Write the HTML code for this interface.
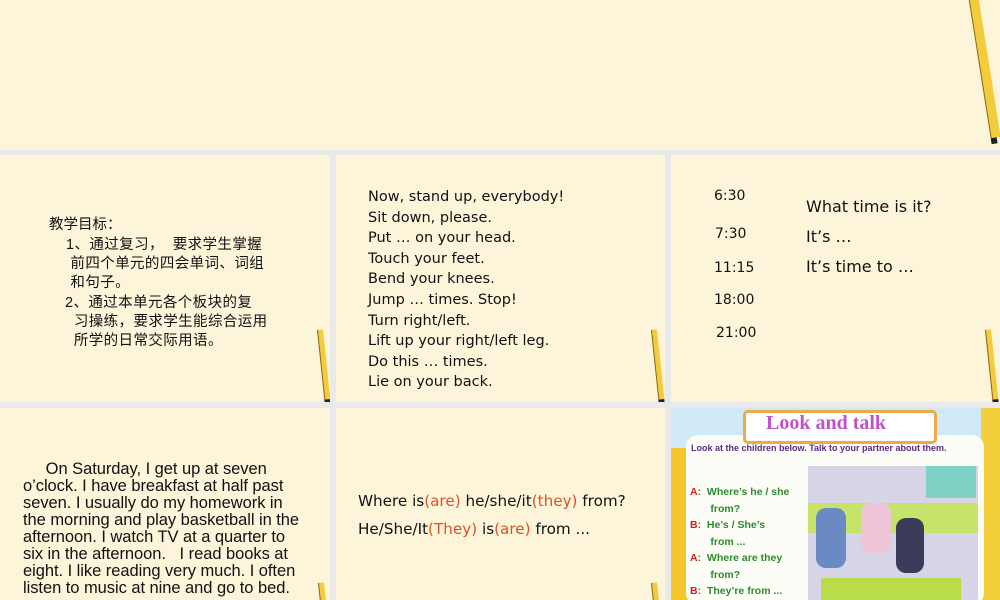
<!DOCTYPE html>
<html><head><meta charset="utf-8"><style>
body{margin:0;width:1000px;height:600px;background:#e9e9e9;position:relative;overflow:hidden;font-family:"Liberation Sans","Noto Sans CJK SC",sans-serif}
.s{position:absolute;background:#fdf5da;overflow:hidden}
.a{position:absolute;white-space:nowrap}
.p{position:absolute;width:5px;background:#f2cc3c;border-left:1px solid #8a6a20;transform-origin:top left}
.p:after{content:"";position:absolute;left:-1px;bottom:-6px;width:6px;height:6px;background:#222}
.dv{font-family:"DejaVu Sans",sans-serif;color:#111}
.r{color:#d9532a}
</style></head><body>
<div class="s" style="left:0;top:0;width:1000px;height:150px">
  <div class="p" style="left:968px;top:-5px;height:145px;transform:rotate(-9deg);width:9px"></div>
</div>
<div class="s" style="left:0;top:155px;width:330px;height:247px">
  <div class="a" style="left:49px;top:61px;font-size:14.5px;line-height:19px;color:#111">教学目标：</div>
  <div class="a" style="left:66px;top:81px;font-size:14.5px;line-height:19px;color:#111;letter-spacing:0.4px">1、通过复习，&nbsp; 要求学生掌握<br>&nbsp;前四个单元的四会单词、词组<br>&nbsp;和句子。</div>
  <div class="a" style="left:65px;top:139px;font-size:14.5px;line-height:19px;color:#111;letter-spacing:0.4px">2、通过本单元各个板块的复<br>&nbsp;&nbsp;习操练，要求学生能综合运用<br>&nbsp;&nbsp;所学的日常交际用语。</div>
  <div class="p" style="left:317px;top:175px;height:70px;transform:rotate(-6deg)"></div>
</div>
<div class="s" style="left:336px;top:155px;width:329px;height:247px">
  <div class="a dv" style="left:32px;top:32px;font-size:14.5px;line-height:20.6px">Now, stand up, everybody!<br>Sit down, please.<br>Put … on your head.<br>Touch your feet.<br>Bend your knees.<br>Jump … times. Stop!<br>Turn right/left.<br>Lift up your right/left leg.<br>Do this … times.<br>Lie on your back.</div>
  <div class="p" style="left:315px;top:175px;height:70px;transform:rotate(-6deg)"></div>
</div>
<div class="s" style="left:671px;top:155px;width:329px;height:247px">
  <div class="a dv" style="left:43px;top:33px;font-size:14px">6:30</div>
  <div class="a dv" style="left:44px;top:71px;font-size:14px">7:30</div>
  <div class="a dv" style="left:43px;top:105px;font-size:14px">11:15</div>
  <div class="a dv" style="left:43px;top:137px;font-size:14px">18:00</div>
  <div class="a dv" style="left:45px;top:170px;font-size:14px">21:00</div>
  <div class="a dv" style="left:135px;top:37px;font-size:16px;line-height:30px">What time is it?<br>It’s …<br>It’s time to …</div>
  <div class="p" style="left:314px;top:175px;height:70px;transform:rotate(-6deg)"></div>
</div>
<div class="s" style="left:0;top:408px;width:330px;height:192px">
  <div class="a" style="left:23px;top:53px;font-size:16.5px;line-height:17px;color:#111;letter-spacing:-0.05px">&nbsp;&nbsp;&nbsp;&nbsp;&nbsp;On Saturday, I get up at seven<br>o’clock. I have breakfast at half past<br>seven. I usually do my homework in<br>the morning and play basketball in the<br>afternoon. I watch TV at a quarter to<br>six in the afternoon.&nbsp;&nbsp; I read books at<br>eight. I like reading very much. I often<br>listen to music at nine and go to bed.</div>
  <div class="p" style="left:318px;top:175px;height:30px;transform:rotate(-6deg)"></div>
</div>
<div class="s" style="left:336px;top:408px;width:329px;height:192px">
  <div class="a dv" style="left:22px;top:79px;font-size:15.2px;line-height:28px">Where is<span class="r">(are)</span> he/she/it<span class="r">(they)</span> from?<br>He/She/It<span class="r">(They)</span> is<span class="r">(are)</span> from ...</div>
  <div class="p" style="left:315px;top:175px;height:30px;transform:rotate(-6deg)"></div>
</div>
<div class="s" style="left:671px;top:408px;width:329px;height:192px;background:#fbe98a">
  <div style="position:absolute;left:0;top:0;width:329px;height:40px;background:#cfeaf6"></div>
  <div style="position:absolute;left:0;top:40px;width:20px;height:152px;background:#f4c62c"></div>
  <div style="position:absolute;left:310px;top:0;width:19px;height:192px;background:#f3cf3c"></div>
  <div style="position:absolute;left:15px;top:27px;width:298px;height:170px;background:#fdfdf8;border-radius:12px"></div>
  <div style="position:absolute;left:72px;top:2px;width:188px;height:28px;background:#fff;border:3px solid #f0a84a;border-radius:5px"></div>
  <div class="a" style="left:95px;top:4px;font-size:20px;font-weight:bold;color:#c052c8;font-family:'Liberation Serif',serif">Look and talk</div>
  <div class="a" style="left:20px;top:35px;font-size:9px;font-weight:bold;color:#5a2a88">Look at the children below. Talk to your partner about them.</div>
  <div class="a" style="left:19px;top:76px;font-size:10.5px;font-weight:bold;line-height:16.5px;color:#2d8a2d"><span style="color:#d02020">A</span>:&nbsp; Where’s he / she<br>&nbsp;&nbsp;&nbsp;&nbsp;&nbsp;&nbsp; from?<br><span style="color:#d02020">B</span>:&nbsp; He’s / She’s<br>&nbsp;&nbsp;&nbsp;&nbsp;&nbsp;&nbsp; from ...<br><span style="color:#d02020">A</span>:&nbsp; Where are they<br>&nbsp;&nbsp;&nbsp;&nbsp;&nbsp;&nbsp; from?<br><span style="color:#d02020">B</span>:&nbsp; They’re from ...</div>
  <div style="position:absolute;left:137px;top:58px;width:170px;height:134px;background:#d6d4e6"></div>
  <div style="position:absolute;left:137px;top:95px;width:170px;height:30px;background:#c6e46a"></div>
  <div style="position:absolute;left:150px;top:170px;width:140px;height:22px;background:#b9dc4a"></div>
  <div style="position:absolute;left:255px;top:58px;width:50px;height:32px;background:#7fd2c4"></div>
  <div style="position:absolute;left:145px;top:100px;width:30px;height:60px;background:#6a8ac4;border-radius:10px"></div>
  <div style="position:absolute;left:225px;top:110px;width:28px;height:55px;background:#3c3c5a;border-radius:10px"></div>
  <div style="position:absolute;left:190px;top:95px;width:30px;height:50px;background:#f0c4d8;border-radius:10px"></div>
</div>
</body></html>
